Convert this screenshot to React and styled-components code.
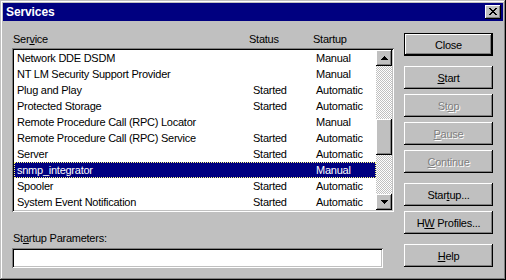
import styled, { createGlobalStyle, css } from "styled-components";

const GlobalStyle = createGlobalStyle`
  html, body {
    margin: 0;
    padding: 0;
    background: #c0c0c0;
  }
  * {
    box-sizing: border-box;
  }
`;

const raised = css`
  box-shadow: inset -1px -1px #000, inset 1px 1px #fff, inset -2px -2px #808080,
    inset 2px 2px #c0c0c0;
`;

const sunken = css`
  box-shadow: inset 1px 1px #808080, inset -1px -1px #fff, inset 2px 2px #000,
    inset -2px -2px #c0c0c0;
`;

const Window = styled.div`
  width: 506px;
  height: 280px;
  padding: 3px;
  background: #c0c0c0;
  box-shadow: inset -1px -1px #000, inset 1px 1px #c0c0c0, inset -2px -2px #808080,
    inset 2px 2px #fff;
  font-family: "Liberation Sans", Arial, sans-serif;
  font-size: 11px;
  letter-spacing: -0.25px;
  color: #000;
  display: flex;
  flex-direction: column;
`;

const TitleBar = styled.div`
  height: 18px;
  background: #000080;
  display: flex;
  align-items: center;
  justify-content: space-between;
  padding: 0 2px 0 3px;
`;

const Title = styled.span`
  color: #fff;
  font-weight: bold;
  font-size: 12px;
  letter-spacing: -0.1px;
`;

const CaptionButton = styled.div`
  width: 16px;
  height: 14px;
  background: #c0c0c0;
  ${raised};
  display: flex;
  align-items: center;
  justify-content: center;
  padding-bottom: 1px;
`;

const Body = styled.div`
  flex: 1;
  display: flex;
  padding: 0 10px 0 9px;
  gap: 10px;
`;

const LeftColumn = styled.div`
  width: 382px;
  padding-top: 10px;
  display: flex;
  flex-direction: column;
`;

const Header = styled.div`
  height: 17px;
  line-height: 16px;
  display: grid;
  grid-template-columns: 236px 64px 1fr;
  padding-left: 1px;
`;

const ListBox = styled.div`
  height: 164px;
  padding: 2px;
  background: #fff;
  ${sunken};
  display: flex;
`;

const Rows = styled.div`
  flex: 1;
  display: flex;
  flex-direction: column;
`;

const Row = styled.div`
  height: 16px;
  line-height: 16px;
  display: grid;
  grid-template-columns: 236px 63px 1fr;
  padding-left: 3px;
  white-space: nowrap;
  background: ${(p) => (p.$selected ? "#000080" : "transparent")};
  color: ${(p) => (p.$selected ? "#fff" : "#000")};
  outline: ${(p) => (p.$selected ? "1px dotted #ffff80" : "none")};
  outline-offset: -1px;
`;

const ScrollBar = styled.div`
  width: 16px;
  display: flex;
  flex-direction: column;
`;

const ArrowButton = styled.div`
  width: 16px;
  height: 16px;
  background: #c0c0c0;
  ${raised};
  display: flex;
  align-items: center;
  justify-content: center;
`;

const Track = styled.div`
  flex: 1;
  background-color: #c0c0c0;
  background-image: repeating-conic-gradient(#fff 0 25%, #c0c0c0 0 50%);
  background-size: 2px 2px;
`;

const Thumb = styled.div`
  width: 16px;
  height: 36px;
  margin-top: 53px;
  background: #c0c0c0;
  ${raised};
`;

const Label = styled.div`
  margin-top: 18px;
  height: 16px;
  line-height: 16px;
  padding-left: 1px;
`;

const Input = styled.div`
  margin-top: 2px;
  width: 371px;
  height: 20px;
  background: #fff;
  ${sunken};
`;

const RightColumn = styled.div`
  width: 89px;
  padding-top: 12px;
  display: flex;
  flex-direction: column;
`;

const Button = styled.button`
  margin-top: ${(p) => p.$gap || 0}px;
  width: 89px;
  height: 23px;
  padding: 0;
  font-family: "Liberation Sans", Arial, sans-serif;
  font-size: 11px;
  letter-spacing: -0.25px;
  background: #c0c0c0;
  color: #000;
  ${(p) =>
    p.$default
      ? css`
          border: 1px solid #000;
          box-shadow: inset -1px -1px #000, inset 1px 1px #fff,
            inset -2px -2px #808080, inset 2px 2px #c0c0c0;
        `
      : css`
          border: none;
          ${raised};
        `}
  &:disabled {
    color: #808080;
    text-shadow: 1px 1px #fff;
  }
`;

const services = [
  ["Network DDE DSDM", "", "Manual"],
  ["NT LM Security Support Provider", "", "Manual"],
  ["Plug and Play", "Started", "Automatic"],
  ["Protected Storage", "Started", "Automatic"],
  ["Remote Procedure Call (RPC) Locator", "", "Manual"],
  ["Remote Procedure Call (RPC) Service", "Started", "Automatic"],
  ["Server", "Started", "Automatic"],
  ["snmp_integrator", "", "Manual"],
  ["Spooler", "Started", "Automatic"],
  ["System Event Notification", "Started", "Automatic"],
];

function CloseGlyph() {
  return (
    <svg width="8" height="7" viewBox="0 0 8 7" shapeRendering="crispEdges">
      <path
        d="M0 0h2v1H0zM6 0h2v1H6zM1 1h2v1H1zM5 1h2v1H5zM2 2h4v1H2zM3 3h2v1H3zM2 4h4v1H2zM1 5h2v1H1zM5 5h2v1H5zM0 6h2v1H0zM6 6h2v1H6z"
        fill="#000"
      />
    </svg>
  );
}

function Arrow({ down }) {
  return (
    <svg width="7" height="4" viewBox="0 0 7 4" shapeRendering="crispEdges">
      <path
        d={
          down
            ? "M0 0h7v1H0zM1 1h5v1H1zM2 2h3v1H2zM3 3h1v1H3z"
            : "M3 0h1v1H3zM2 1h3v1H2zM1 2h5v1H1zM0 3h7v1H0z"
        }
        fill="#000"
      />
    </svg>
  );
}

function App() {
  return (
    <>
      <GlobalStyle />
      <Window>
        <TitleBar>
          <Title>Services</Title>
          <CaptionButton>
            <CloseGlyph />
          </CaptionButton>
        </TitleBar>
        <Body>
          <LeftColumn>
            <Header>
              <span>
                Ser<u>v</u>ice
              </span>
              <span>Status</span>
              <span>Startup</span>
            </Header>
            <ListBox>
              <Rows>
                {services.map(([name, status, startup]) => (
                  <Row key={name} $selected={name === "snmp_integrator"}>
                    <span>{name}</span>
                    <span>{status}</span>
                    <span>{startup}</span>
                  </Row>
                ))}
              </Rows>
              <ScrollBar>
                <ArrowButton>
                  <Arrow />
                </ArrowButton>
                <Track>
                  <Thumb />
                </Track>
                <ArrowButton>
                  <Arrow down />
                </ArrowButton>
              </ScrollBar>
            </ListBox>
            <Label>
              St<u>a</u>rtup Parameters:
            </Label>
            <Input />
          </LeftColumn>
          <RightColumn>
            <Button $default>Close</Button>
            <Button $gap={10}>
              <u>S</u>tart
            </Button>
            <Button $gap={5} disabled>
              St<u>o</u>p
            </Button>
            <Button $gap={5} disabled>
              <u>P</u>ause
            </Button>
            <Button $gap={5} disabled>
              <u>C</u>ontinue
            </Button>
            <Button $gap={10}>
              Star<u>t</u>up...
            </Button>
            <Button $gap={5}>
              H<u>W</u> Profiles...
            </Button>
            <Button $gap={10}>
              <u>H</u>elp
            </Button>
          </RightColumn>
        </Body>
      </Window>
    </>
  );
}

export default App;
